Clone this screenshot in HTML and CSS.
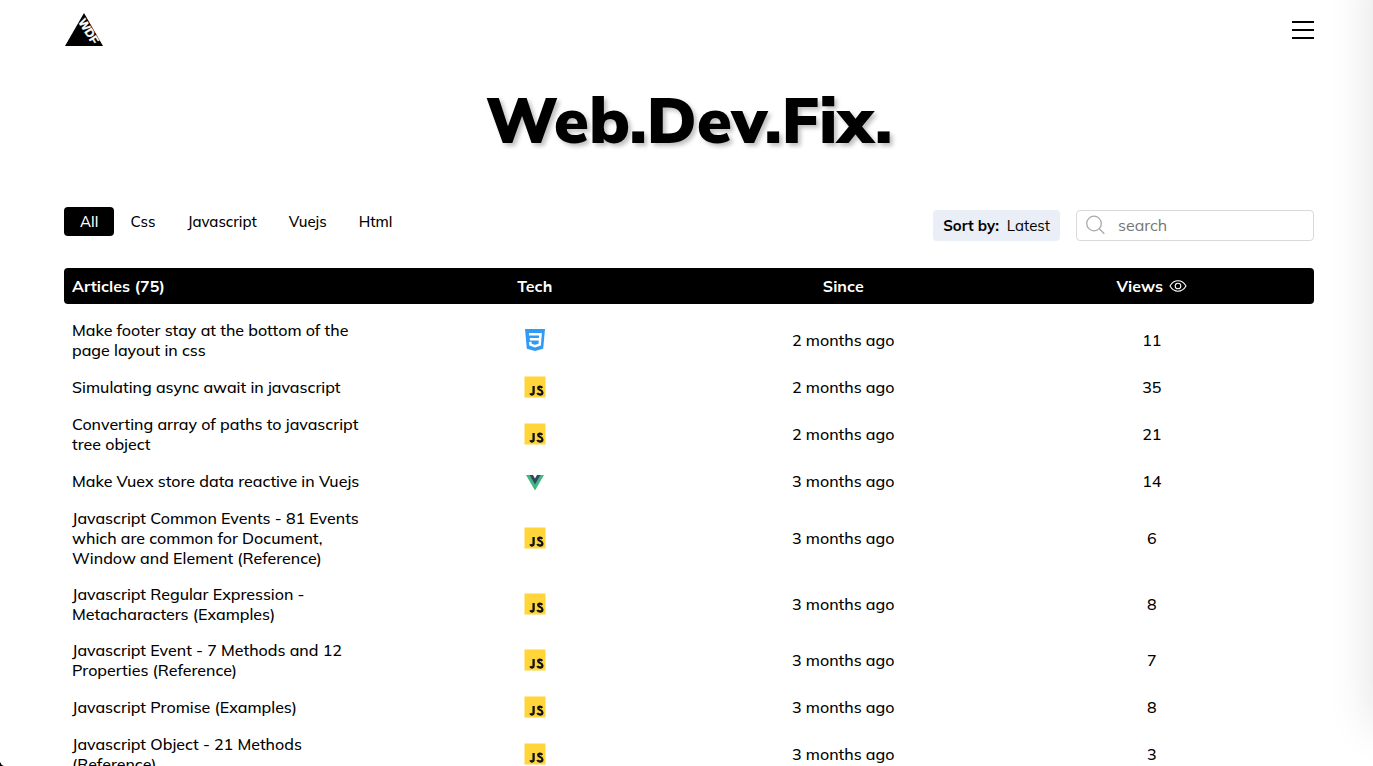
FILE: index.html
```html
<!DOCTYPE html>
<html lang="en">
<head>
<meta charset="utf-8">
<title>Web.Dev.Fix.</title>
<meta name="viewport" content="width=device-width, initial-scale=1">
<link rel="stylesheet" href="styles.css">
</head>
<body>
<svg class="sprite" aria-hidden="true">
  <symbol id="js" viewBox="0 0 22 22">
    <rect x=".5" y=".5" width="21" height="21" fill="#ffd53a"/>
    <path d="M9.600 10.100v6.500q0 1.900-1.500 1.900-1.200 0-1.800-1.200M18.200 11.800q-.8-1.200-2.200-1.200-1.800 0-1.800 1.500 0 1.200 1.900 1.900 2.300.8 2.300 2.400 0 2.100-2.400 2.100-1.900 0-2.700-1.500" fill="none" stroke="#111" stroke-width="2.300"/>
  </symbol>
  <symbol id="css" viewBox="0 0 22 22">
    <path d="M1 0h20l-1.800 19.700L11 22l-8.200-2.300z" fill="#2f9bf5"/>
    <path d="M5 5.200h11.500l-.8 10.400L11 17.100l-4.500-1.500-.2-2.800M5.800 10.300h10" fill="none" stroke="#fff" stroke-width="2.500"/>
  </symbol>
  <symbol id="vue" viewBox="0 0 22 22">
    <path d="M2 5h4l5 8.500L16 5h4l-9 15.500z" fill="#41b883"/>
    <path d="M5.500 5H9l2 3.500L13 5h3.500L11 14.500z" fill="#35495e"/>
  </symbol>
</svg>
<header class="topbar">
  <a href="#" class="logo" aria-label="WDF home">
    <svg width="40" height="34" viewBox="0 0 40 34">
      <path d="M20 0l19 33H1z" fill="#000"/>
      <text class="logo-text" transform="translate(14 9) rotate(58)">WDF</text>
    </svg>
  </a>
  <button class="menu" aria-label="Open menu"><span></span><span></span><span></span></button>
</header>
<main class="page">
  <h1 class="title">Web.Dev.Fix.</h1>
  <div class="toolbar">
    <nav class="tabs">
      <button class="tab active">All</button>
      <button class="tab">Css</button>
      <button class="tab">Javascript</button>
      <button class="tab">Vuejs</button>
      <button class="tab">Html</button>
    </nav>
    <div class="tools">
      <button class="sort"><b>Sort by:</b><span>Latest</span></button>
      <label class="search">
        <svg width="20" height="20" viewBox="0 0 20 20" fill="none" stroke="#aaa" stroke-width="1.300"><circle cx="8" cy="8.500" r="7.300"/><path d="M13.300 13.800l5 5"/></svg>
        <input type="text" placeholder="search" aria-label="search">
      </label>
    </div>
  </div>
  <table class="articles">
    <thead>
      <tr><th>Articles (75)</th><th>Tech</th><th>Since</th><th><span class="views">Views <svg width="18" height="12" viewBox="0 0 18 12" fill="none" stroke="#fff" stroke-width="1.100"><path d="M1 6Q4 .8 9 .8T17 6Q14 11.200 9 11.200T1 6z"/><circle cx="9" cy="6" r="2.800"/></svg></span></th></tr>
    </thead>
    <tbody>
      <tr><td>Make footer stay at the bottom of the page layout in css</td><td><svg class="tech" role="img" aria-label="Css"><use href="#css"/></svg></td><td>2 months ago</td><td>11</td></tr>
      <tr><td>Simulating async await in javascript</td><td><svg class="tech" role="img" aria-label="Javascript"><use href="#js"/></svg></td><td>2 months ago</td><td>35</td></tr>
      <tr><td>Converting array of paths to javascript tree object</td><td><svg class="tech" role="img" aria-label="Javascript"><use href="#js"/></svg></td><td>2 months ago</td><td>21</td></tr>
      <tr><td>Make Vuex store data reactive in Vuejs</td><td><svg class="tech" role="img" aria-label="Vuejs"><use href="#vue"/></svg></td><td>3 months ago</td><td>14</td></tr>
      <tr><td>Javascript Common Events - 81 Events which are common for Document, Window and Element (Reference)</td><td><svg class="tech" role="img" aria-label="Javascript"><use href="#js"/></svg></td><td>3 months ago</td><td>6</td></tr>
      <tr><td>Javascript Regular Expression - Metacharacters (Examples)</td><td><svg class="tech" role="img" aria-label="Javascript"><use href="#js"/></svg></td><td>3 months ago</td><td>8</td></tr>
      <tr><td>Javascript Event - 7 Methods and 12 Properties (Reference)</td><td><svg class="tech" role="img" aria-label="Javascript"><use href="#js"/></svg></td><td>3 months ago</td><td>7</td></tr>
      <tr><td>Javascript Promise (Examples)</td><td><svg class="tech" role="img" aria-label="Javascript"><use href="#js"/></svg></td><td>3 months ago</td><td>8</td></tr>
      <tr><td>Javascript Object - 21 Methods (Reference)</td><td><svg class="tech" role="img" aria-label="Javascript"><use href="#js"/></svg></td><td>3 months ago</td><td>3</td></tr>
    </tbody>
  </table>
</main>
<aside class="drawer" aria-hidden="true"></aside>
<svg class="corner" width="4" height="4" viewBox="0 0 4 4" aria-hidden="true"><path d="M0 0q1 3 4 4H0z"/></svg>
</body>
</html>
```
FILE: styles.css
```css
* { box-sizing: border-box; }
body {
  margin: 0;
  height: 100vh;
  overflow: hidden;
  background: #fff;
  color: #000;
  font: 500 16px/20px Mulish, Muli, "Open Sans", sans-serif;
}
button, input { font: inherit; color: inherit; }
button { border: 0; background: none; cursor: pointer; }
.sprite { display: none; }
.topbar, .page { margin: 0 59px 0 64px; }
.topbar {
  display: flex;
  justify-content: space-between;
  align-items: center;
  height: 60px;
}
.logo svg { display: block; overflow: visible; }
.logo-text { font: 700 12px "Liberation Sans", sans-serif; fill: #fff; stroke: #fff; stroke-width: .3px; }
.menu {
  display: flex;
  flex-direction: column;
  gap: 6px;
  width: 22px;
  padding: 0;
}
.menu span { height: 2px; background: #000; }
.title {
  margin: 19px 0 48px;
  text-align: center;
  font: 900 64px/80px Mulish, Muli, "Open Sans", sans-serif;
  text-shadow: 3px 3px 4px rgba(0, 0, 0, .25);
}
.toolbar { display: flex; justify-content: space-between; }
.tabs { display: flex; align-items: flex-start; }
.tab { height: 29px; padding: 0 16px; border-radius: 4px; font-size: 15px; }
.tab.active { background: #000; color: #fff; }
.tools { display: flex; gap: 16px; padding-top: 3px; }
.sort {
  display: flex;
  align-items: center;
  gap: 8px;
  height: 31px;
  padding: 0 10px;
  border-radius: 4px;
  background: #eaeef6;
  font-size: 15px;
}
.sort b { font-weight: 700; }
.sort span { font-weight: 400; }
.search {
  display: flex;
  align-items: center;
  gap: 12px;
  width: 238px;
  height: 31px;
  padding: 0 9px 1px;
  border: 1px solid #d9d9d9;
  border-radius: 4px;
}
.search svg { flex: none; }
.search input {
  flex: 1;
  min-width: 0;
  padding: 0;
  border: 0;
  outline: 0;
  background: none;
  font-weight: 400;
}
.search input::placeholder { color: #757575; }
.articles { display: block; margin-top: 27px; }
.articles thead, .articles tbody { display: block; }
.articles tbody { padding-top: 8px; }
.articles tr {
  display: grid;
  grid-template-columns: repeat(4, 1fr);
  align-items: center;
  padding: 8px;
}
.articles thead tr { border-radius: 4px; background: #000; color: #fff; }
.articles th, .articles td { padding: 0; text-align: center; }
.articles th { font-weight: 700; }
.articles th:first-child, .articles td:first-child { padding-right: 12px; text-align: left; }
.views { display: inline-flex; align-items: center; gap: 6px; }
.tech { display: block; width: 22px; height: 22px; margin: 0 auto; }
.drawer {
  position: fixed;
  top: 0;
  left: 100%;
  width: 320px;
  height: 100vh;
  background: #fff;
  box-shadow: 0 -40px 44px rgba(0, 0, 0, .12);
}
.corner { position: fixed; left: 0; bottom: 0; }
```
